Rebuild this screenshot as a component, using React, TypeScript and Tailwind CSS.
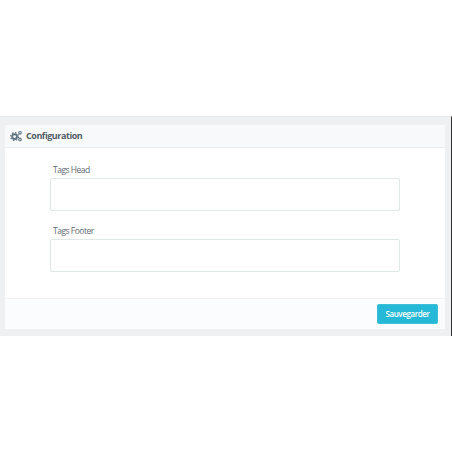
import React from "react";

function Gears() {
  return (
    <svg width="12" height="12" viewBox="0 0 12 12" fill="none" stroke="#5f7580">
      <circle cx="4.6" cy="6.6" r="2.4" strokeWidth="1.9" />
      <circle cx="4.6" cy="6.6" r="3.9" strokeWidth="1.2" strokeDasharray="1.5 1.55" />
      <circle cx="10" cy="2.8" r="1.3" strokeWidth="1.1" />
      <circle cx="10" cy="9.4" r="1.3" strokeWidth="1.1" />
    </svg>
  );
}

function Field({ label }: { label: string }) {
  return (
    <div className="flex flex-col">
      <label className="pl-[3px] h-[14px] text-[8.5px] tracking-[-0.5px] leading-[16px] text-[#5f6b72]">{label}</label>
      <div className="mt-[2px] h-[33px] bg-white border border-[#dfe7e7] rounded-[2px]" />
    </div>
  );
}

export default function App() {
  return (
    <div className="w-[452px] h-[452px] bg-white pt-[116px] font-['Open_Sans',sans-serif]">
      <div className="h-[220px] bg-[#eef0f1] border-t border-[#e6e8e9] pt-[8px] pl-[5px] pr-[6px] border-r border-r-[#333]">
        <div className="h-[204px] w-[440px] bg-white flex flex-col">
          <div className="h-[23px] shrink-0 bg-[#f8f9fb] border-b border-[#eceef0] flex items-center gap-[4px] pl-[5px]">
            <Gears />
            <span className="text-[9px] tracking-[-0.45px] font-bold text-[#525e66]">Configuration</span>
          </div>
          <div className="flex-1 px-[45px] pt-[14px] flex flex-col gap-[12px]">
            <Field label="Tags Head" />
            <Field label="Tags Footer" />
          </div>
          <div className="h-[31px] shrink-0 bg-[#fbfcfd] border-t border-[#f0f2f3] flex items-center justify-end pr-[7px]">
            <button className="w-[61px] h-[20px] bg-[#25b9d7] border border-[#3cc0da] rounded-[2px] text-white text-[8px] tracking-[-0.4px] font-semibold">
              Sauvegarder
            </button>
          </div>
        </div>
      </div>
    </div>
  );
}
